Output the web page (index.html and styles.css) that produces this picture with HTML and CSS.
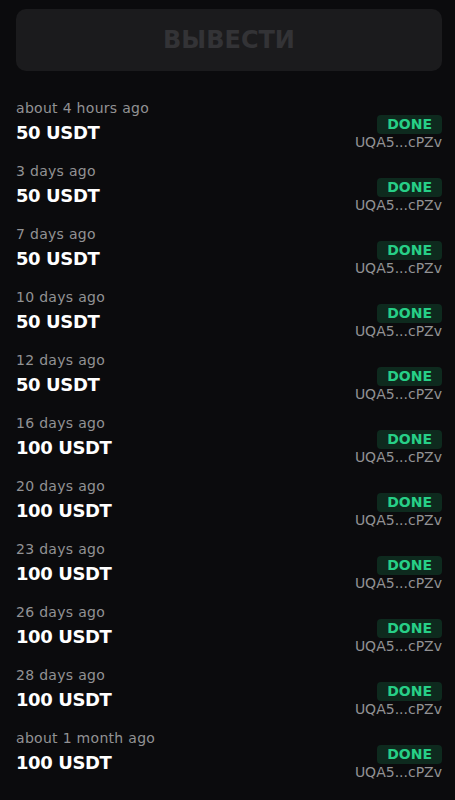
FILE: index.html
```html
<html><head>
<meta charset="utf-8">
<title>Выводы</title>
<link rel="stylesheet" href="styles.css">
</head><body>

<div class="page">
<div class="withdraw">ВЫВЕСТИ</div>

<div class="list">
<div class="row"><div class="info"><div class="time">about 4 hours ago</div><div class="amount">50 USDT</div></div><div class="side"><span class="status">DONE</span><div class="addr">UQA5...cPZv</div></div></div>
<div class="row"><div class="info"><div class="time">3 days ago</div><div class="amount">50 USDT</div></div><div class="side"><span class="status">DONE</span><div class="addr">UQA5...cPZv</div></div></div>
<div class="row"><div class="info"><div class="time">7 days ago</div><div class="amount">50 USDT</div></div><div class="side"><span class="status">DONE</span><div class="addr">UQA5...cPZv</div></div></div>
<div class="row"><div class="info"><div class="time">10 days ago</div><div class="amount">50 USDT</div></div><div class="side"><span class="status">DONE</span><div class="addr">UQA5...cPZv</div></div></div>
<div class="row"><div class="info"><div class="time">12 days ago</div><div class="amount">50 USDT</div></div><div class="side"><span class="status">DONE</span><div class="addr">UQA5...cPZv</div></div></div>
<div class="row"><div class="info"><div class="time">16 days ago</div><div class="amount">100 USDT</div></div><div class="side"><span class="status">DONE</span><div class="addr">UQA5...cPZv</div></div></div>
<div class="row"><div class="info"><div class="time">20 days ago</div><div class="amount">100 USDT</div></div><div class="side"><span class="status">DONE</span><div class="addr">UQA5...cPZv</div></div></div>
<div class="row"><div class="info"><div class="time">23 days ago</div><div class="amount">100 USDT</div></div><div class="side"><span class="status">DONE</span><div class="addr">UQA5...cPZv</div></div></div>
<div class="row"><div class="info"><div class="time">26 days ago</div><div class="amount">100 USDT</div></div><div class="side"><span class="status">DONE</span><div class="addr">UQA5...cPZv</div></div></div>
<div class="row"><div class="info"><div class="time">28 days ago</div><div class="amount">100 USDT</div></div><div class="side"><span class="status">DONE</span><div class="addr">UQA5...cPZv</div></div></div>
<div class="row"><div class="info"><div class="time">about 1 month ago</div><div class="amount">100 USDT</div></div><div class="side"><span class="status">DONE</span><div class="addr">UQA5...cPZv</div></div></div>
</div>
</div>

</body></html>
```

FILE: styles.css
```css
html,body{margin:0;background:#0b0b0d;}
body{font-family:"DejaVu Sans",sans-serif;color:#fff;}
.page{padding:9px 13px 0 16px;}

.withdraw{height:62px;border-radius:10px;background:#1b1b1d;color:#333336;font-size:24px;font-weight:bold;line-height:62px;text-align:center;}

.list{margin-top:27px;}
.row{display:flex;justify-content:space-between;height:63px;}
.time{height:20px;color:#929294;font-size:14px;line-height:20px;letter-spacing:.3px;}
.amount{height:24px;margin-top:3px;font-size:18px;font-weight:bold;line-height:24px;letter-spacing:-.4px;}
.side{display:flex;flex-direction:column;align-items:flex-end;padding-top:17px;}
.status{display:inline-block;height:19px;padding:0 10px;border-radius:4px;background:#0e2a1e;color:#27cf87;font-size:14px;font-weight:bold;line-height:19px;}
.addr{height:16px;color:#929294;font-size:14px;line-height:16px;}
```
